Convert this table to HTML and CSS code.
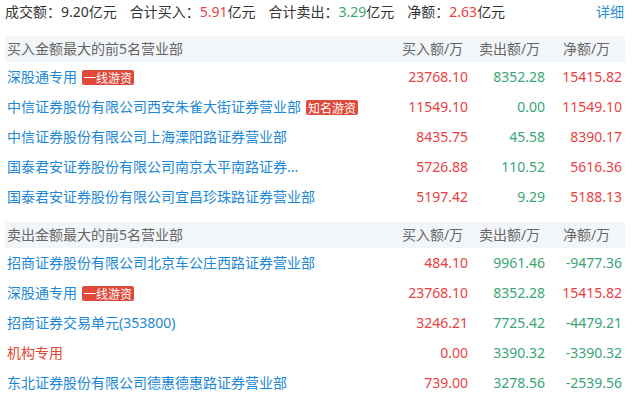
FILE: index.html
```html
<!DOCTYPE html>
<html lang="zh-CN">
<head>
<meta charset="utf-8">
<title>龙虎榜</title>
<link rel="stylesheet" href="styles.css">
</head>
<body>
<div class="page">
  <div class="summary">
    <div class="sum-items">
      <span class="item">成交额：<span class="v">9.20</span>亿元</span>
      <span class="item">合计买入：<span class="v red">5.91</span>亿元</span>
      <span class="item">合计卖出：<span class="v green">3.29</span>亿元</span>
      <span class="item">净额：<span class="v red">2.63</span>亿元</span>
    </div>
    <a class="detail">详细</a>
  </div>

  <div class="table">
    <div class="head">
      <div class="h-name">买入金额最大的前5名营业部</div>
      <div class="h-col">买入额/万</div>
      <div class="h-col">卖出额/万</div>
      <div class="h-col">净额/万</div>
    </div>
    <div class="row">
      <div class="name"><span class="link">深股通专用</span><span class="tag">一线游资</span></div>
      <div class="num red">23768.10</div><div class="num green">8352.28</div><div class="num red">15415.82</div>
    </div>
    <div class="row">
      <div class="name"><span class="link">中信证券股份有限公司西安朱雀大街证券营业部</span><span class="tag">知名游资</span></div>
      <div class="num red">11549.10</div><div class="num green">0.00</div><div class="num red">11549.10</div>
    </div>
    <div class="row">
      <div class="name"><span class="link">中信证券股份有限公司上海溧阳路证券营业部</span></div>
      <div class="num red">8435.75</div><div class="num green">45.58</div><div class="num red">8390.17</div>
    </div>
    <div class="row">
      <div class="name"><span class="link">国泰君安证券股份有限公司南京太平南路证券...</span></div>
      <div class="num red">5726.88</div><div class="num green">110.52</div><div class="num red">5616.36</div>
    </div>
    <div class="row">
      <div class="name"><span class="link">国泰君安证券股份有限公司宜昌珍珠路证券营业部</span></div>
      <div class="num red">5197.42</div><div class="num green">9.29</div><div class="num red">5188.13</div>
    </div>
  </div>

  <div class="table second">
    <div class="head">
      <div class="h-name">卖出金额最大的前5名营业部</div>
      <div class="h-col">买入额/万</div>
      <div class="h-col">卖出额/万</div>
      <div class="h-col">净额/万</div>
    </div>
    <div class="row">
      <div class="name"><span class="link">招商证券股份有限公司北京车公庄西路证券营业部</span></div>
      <div class="num red">484.10</div><div class="num green">9961.46</div><div class="num green">-9477.36</div>
    </div>
    <div class="row">
      <div class="name"><span class="link">深股通专用</span><span class="tag">一线游资</span></div>
      <div class="num red">23768.10</div><div class="num green">8352.28</div><div class="num red">15415.82</div>
    </div>
    <div class="row">
      <div class="name"><span class="link">招商证券交易单元(353800)</span></div>
      <div class="num red">3246.21</div><div class="num green">7725.42</div><div class="num green">-4479.21</div>
    </div>
    <div class="row">
      <div class="name"><span class="inst">机构专用</span></div>
      <div class="num red">0.00</div><div class="num green">3390.32</div><div class="num green">-3390.32</div>
    </div>
    <div class="row">
      <div class="name"><span class="link">东北证券股份有限公司德惠德惠路证券营业部</span></div>
      <div class="num red">739.00</div><div class="num green">3278.56</div><div class="num green">-2539.56</div>
    </div>
  </div>
</div>
</body>
</html>
```

FILE: styles.css
```css
html, body {
  margin: 0;
  padding: 0;
  background: #ffffff;
}
body {
  font-family: "Noto Sans", "Noto Sans CJK SC", sans-serif;
  font-size: 14px;
  color: #333333;
}
.page {
  padding: 0 7px 0 5px;
}
.summary {
  display: flex;
  justify-content: space-between;
  align-items: center;
  height: 24px;
  line-height: 24px;
  padding-right: 1px;
  margin-bottom: 12px;
}
.sum-items {
  display: flex;
  gap: 13px;
  white-space: nowrap;
}
.detail {
  color: #2b8fd6;
  cursor: pointer;
}
.red { color: #ea3f43; }
.green { color: #3aa677; }

.table.second {
  margin-top: 10px;
}
.head, .row {
  display: grid;
  grid-template-columns: 1fr 77px 77px 77px;
  align-items: center;
}
.head {
  background: #f3f6f9;
  height: 26px;
  line-height: 26px;
  color: #666666;
}
.h-name {
  padding-left: 2px;
}
.h-col {
  text-align: center;
}
.row {
  height: 30px;
  line-height: 30px;
}
.name {
  padding-left: 2px;
  display: flex;
  align-items: center;
  white-space: nowrap;
  overflow: hidden;
}
.link {
  color: #1d88d3;
}
.inst {
  color: #e4452f;
}
.tag {
  margin-left: 5px;
  background: #e04a3a;
  color: #ffffff;
  font-family: "Noto Sans CJK SC", sans-serif;
  font-size: 12px;
  line-height: 15px;
  height: 15px;
  padding: 0 2px;
  border-radius: 2px;
}
.num {
  text-align: right;
  padding-right: 3px;
}
```
